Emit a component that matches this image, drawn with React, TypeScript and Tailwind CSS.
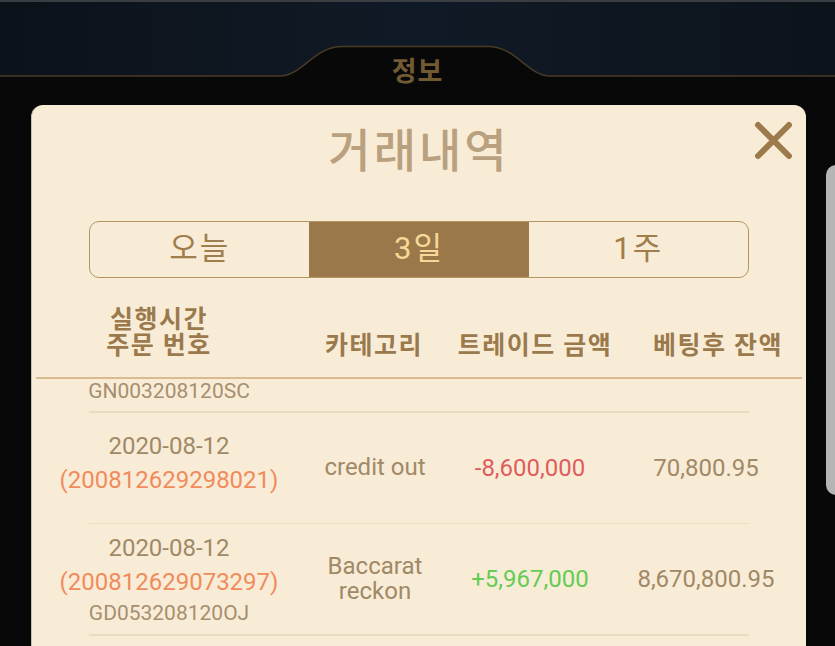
import React from "react";

const font = "font-['Roboto','Noto_Sans_CJK_KR',sans-serif]";

type Row = {
  date: string;
  order: string;
  code?: string;
  category: string[];
  amount: string;
  positive: boolean;
  balance: string;
};

const rows: Row[] = [
  {
    date: "2020-08-12",
    order: "(200812629298021)",
    category: ["credit out"],
    amount: "-8,600,000",
    positive: false,
    balance: "70,800.95",
  },
  {
    date: "2020-08-12",
    order: "(200812629073297)",
    code: "GD053208120OJ",
    category: ["Baccarat", "reckon"],
    amount: "+5,967,000",
    positive: true,
    balance: "8,670,800.95",
  },
];

function TopBar() {
  return (
    <div className="relative h-[92px] w-full">
      <svg
        className="absolute inset-0"
        width="835"
        height="92"
        viewBox="0 0 835 92"
      >
        <defs>
          <linearGradient id="navy" x1="0" y1="0" x2="1" y2="0">
            <stop offset="0" stopColor="#0c121a" />
            <stop offset="0.5" stopColor="#101a26" />
            <stop offset="1" stopColor="#0c131b" />
          </linearGradient>
        </defs>
        <rect x="0" y="0" width="835" height="92" fill="url(#navy)" />
        <rect x="0" y="0" width="835" height="2" fill="#3a3e42" />
        <path
          d="M0 76 L280 76 C302 76 314 46.5 342 46.5 L488 46.5 C516 46.5 528 76 550 76 L835 76 L835 92 L0 92 Z"
          fill="#080809"
        />
        <path
          d="M0 76 L280 76 C302 76 314 46.5 342 46.5 L488 46.5 C516 46.5 528 76 550 76 L835 76"
          fill="none"
          stroke="#4a3b24"
          strokeWidth="1.5"
        />
      </svg>
      <div className="relative flex justify-center pt-[56px]">
        <span className="text-[27px] leading-[32px] font-semibold tracking-[1px] text-[#725a33]">
          정보
        </span>
      </div>
    </div>
  );
}

function Segments() {
  const items = ["오늘", "3일", "1주"];
  return (
    <div className="mx-auto mt-[42px] flex h-[57px] w-[660px] overflow-hidden rounded-[10px] border-[1.5px] border-[#b39463]">
      {items.map((t, i) => (
        <div
          key={t}
          className={
            i === 1
              ? "flex flex-1 items-center justify-center bg-[#9b784a] text-[31px] tracking-[2px] text-[#f6d998]"
              : "flex flex-1 items-center justify-center text-[31px] tracking-[2px] text-[#a07d4c]"
          }
        >
          {t}
        </div>
      ))}
    </div>
  );
}

function Divider() {
  return <div className="mx-auto h-[1.5px] w-[660px] bg-[#eadbc2]" />;
}

export default function App() {
  return (
    <div
      className={`relative h-[646px] w-[835px] overflow-hidden bg-[#080809] ${font}`}
    >
      <TopBar />
      <div className="mt-[13px] flex items-start">
        <div className="relative ml-[31px] h-[541px] w-[775px] shrink-0 rounded-t-[12px] border-l border-[#c9bfae] bg-[#f9ecd7]">
          {/* title */}
          <div className="pt-[18px] text-center text-[46px] leading-[56px] font-medium tracking-[3px] text-[#b9a17f]">
            거래내역
          </div>
          <svg
            className="absolute top-[15px] right-[12px]"
            width="41"
            height="41"
            viewBox="0 0 41 41"
          >
            <path
              d="M5 5 L36 36 M36 5 L5 36"
              stroke="#9c7a4b"
              strokeWidth="6"
              strokeLinecap="round"
            />
          </svg>

          <Segments />

          {/* header */}
          <div className="mt-[29px] mr-[4px] ml-[4px] flex items-end border-b-2 border-[#d9bc8e] pb-[18px] pl-[22px] text-[25px] leading-[26px] font-semibold tracking-[1.5px] whitespace-nowrap text-[#9a7a4d]">
            <div className="flex w-[202px] flex-col items-center">
              <span>실행시간</span>
              <span>주문 번호</span>
            </div>
            <div className="ml-[40px] flex w-[148px] justify-center">카테고리</div>
            <div className="flex w-[174px] justify-center">트레이드 금액</div>
            <div className="ml-[18px] flex w-[156px] justify-center">베팅후 잔액</div>
          </div>

          {/* previous row tail */}
          <div className="ml-[26px] flex h-[32px] pb-[8px]">
            <div className="flex w-[222px] justify-center text-[21px] leading-[24px] text-[#a68f6f]">
              GN003208120SC
            </div>
          </div>
          <Divider />

          {rows.map((r) => (
            <div key={r.order}>
              <div className="ml-[26px] flex h-[110px] items-center text-[24px] whitespace-nowrap text-[#a08966]">
                <div className="flex w-[222px] flex-col items-center">
                  <span className="leading-[34px]">{r.date}</span>
                  <span className="leading-[34px] text-[#f08b5c]">{r.order}</span>
                  {r.code ? (
                    <span className="text-[21px] leading-[28px] text-[#a68f6f]">
                      {r.code}
                    </span>
                  ) : (
                    <span className="h-[10px]" />
                  )}
                </div>
                <div className="flex w-[190px] flex-col items-center leading-[25px]">
                  {r.category.map((c) => (
                    <span key={c}>{c}</span>
                  ))}
                </div>
                <div
                  className={
                    r.positive
                      ? "flex w-[120px] justify-center text-[#63cc52]"
                      : "flex w-[120px] justify-center text-[#e05c5c]"
                  }
                >
                  {r.amount}
                </div>
                <div className="ml-[32px] flex w-[168px] justify-center">
                  {r.balance}
                </div>
              </div>
              <Divider />
            </div>
          ))}
        </div>
        <div className="mt-[60px] ml-[20px] h-[330px] w-[14px] shrink-0 rounded-l-[10px] bg-[#b5b5b5]" />
      </div>
    </div>
  );
}
